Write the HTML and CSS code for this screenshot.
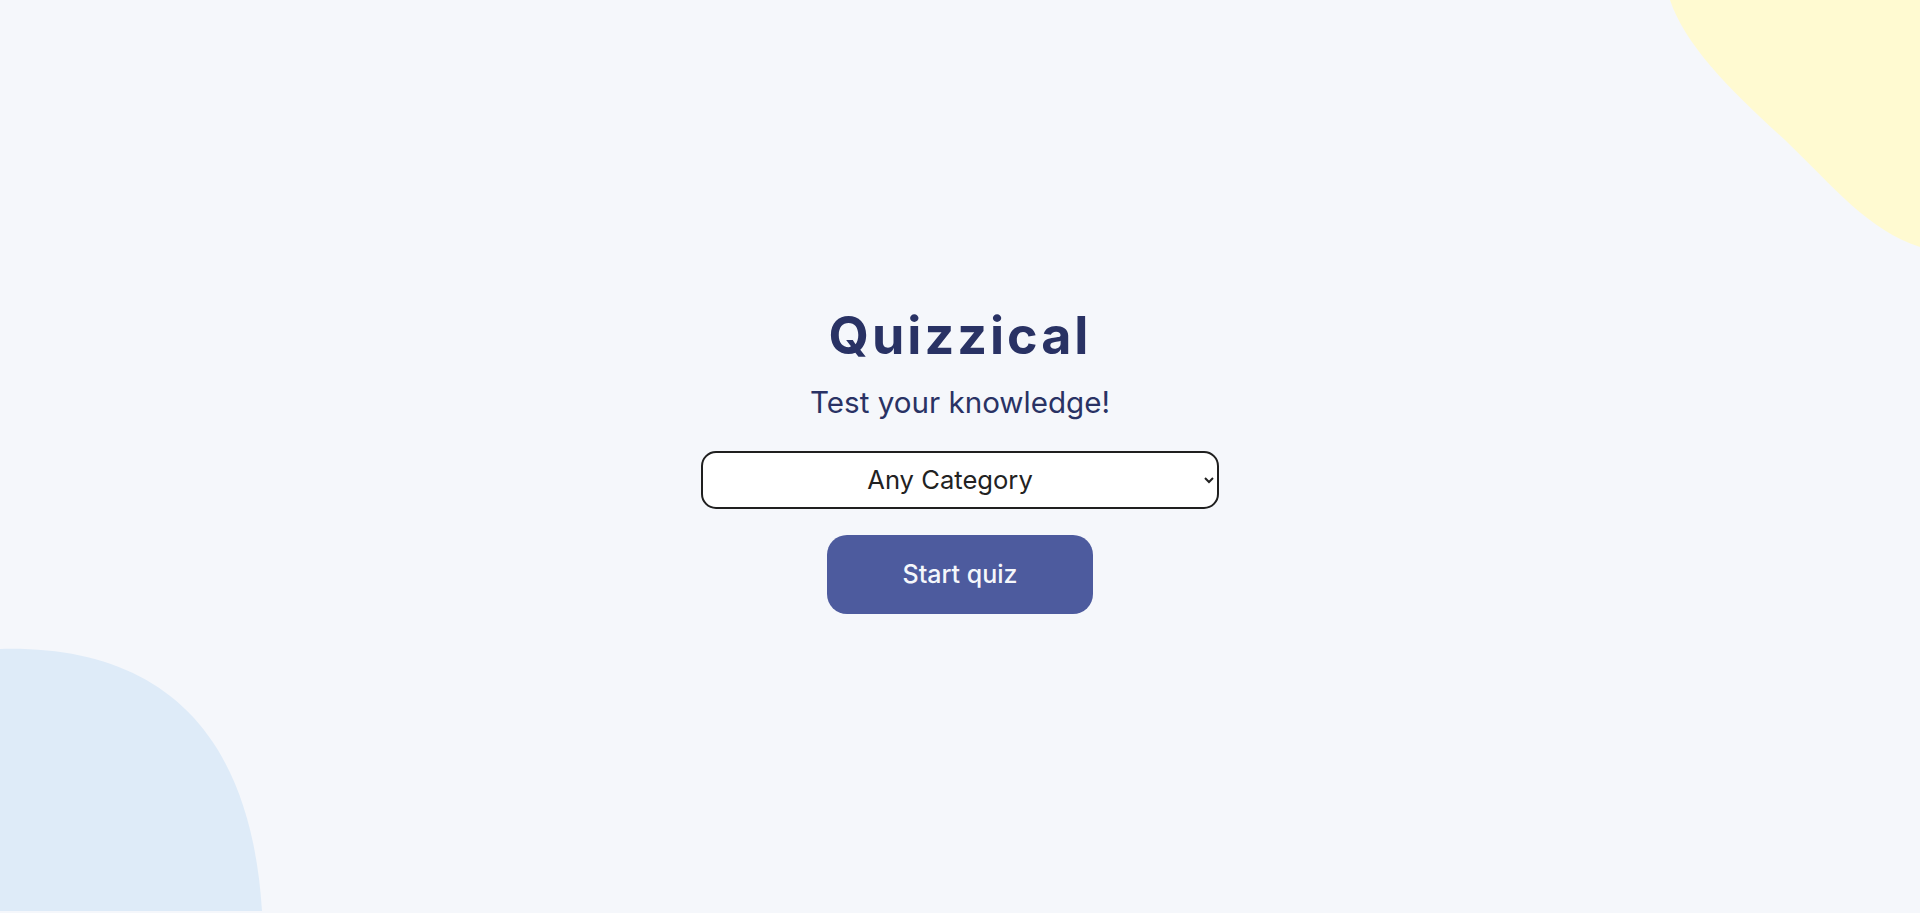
FILE: index.html
```html
<!DOCTYPE html>
<html lang="en">
<head>
<meta charset="utf-8">
<title>Quizzical</title>
<link rel="stylesheet" href="styles.css">
</head>
<body>
<svg class="blob blob-yellow" width="260" height="250" viewBox="1660 0 260 250" aria-hidden="true">
  <path d="M1670,0 C1685,45 1730,90 1785,140 C1835,188 1868,230 1920,247 L1920,0 Z" fill="#FFFAD1"/>
</svg>
<svg class="blob blob-blue" width="270" height="270" viewBox="0 643 270 270" aria-hidden="true">
  <path d="M0,649 C150,645 250,720 262,911 L0,911 Z" fill="#DEEBF8"/>
</svg>
<main class="intro">
  <h1 class="intro-title">Quizzical</h1>
  <p class="intro-subtitle">Test your knowledge!</p>
  <select class="category-select">
    <option>Any Category</option>
    <option>General Knowledge</option>
    <option>Entertainment: Books</option>
    <option>Science &amp; Nature</option>
  </select>
  <button class="start-btn" type="button">Start quiz</button>
</main>
</body>
</html>
```

FILE: styles.css
```css
html, body {
  margin: 0;
  height: 100%;
}
body {
  background: #F5F7FB;
  font-family: Inter, "Noto Sans", sans-serif;
  color: #293264;
  position: relative;
  overflow: hidden;
}
.blob {
  position: absolute;
  display: block;
}
.blob-yellow {
  top: 0;
  right: 0;
}
.blob-blue {
  left: 0;
  bottom: 0;
}
.intro {
  position: relative;
  height: 100%;
  box-sizing: border-box;
  padding-top: 6px;
  display: flex;
  flex-direction: column;
  align-items: center;
  justify-content: center;
}
.intro-title {
  margin: 0;
  font-size: 52px;
  font-weight: 700;
  letter-spacing: 3px;
  line-height: 1.21;
}
.intro-subtitle {
  margin: 17px 0 0;
  font-size: 29.6px;
  font-weight: 400;
  line-height: 1.21;
}
.category-select {
  margin-top: 30px;
  width: 518px;
  height: 58px;
  box-sizing: border-box;
  padding: 0 10px 0 2px;
  border: 2px solid #1f1f1f;
  border-radius: 15px;
  background-color: #fff;
  color: #222222;
  font-family: Inter, "Noto Sans", sans-serif;
  font-size: 25.6px;
  font-weight: 400;
  text-align: center;
  text-align-last: center;
}
.start-btn {
  margin-top: 26px;
  width: 266px;
  height: 79px;
  border: none;
  border-radius: 20px;
  background: #4D5B9E;
  color: #F5F7FB;
  font-family: Inter, "Noto Sans", sans-serif;
  font-size: 25px;
  font-weight: 500;
  cursor: pointer;
}
```
